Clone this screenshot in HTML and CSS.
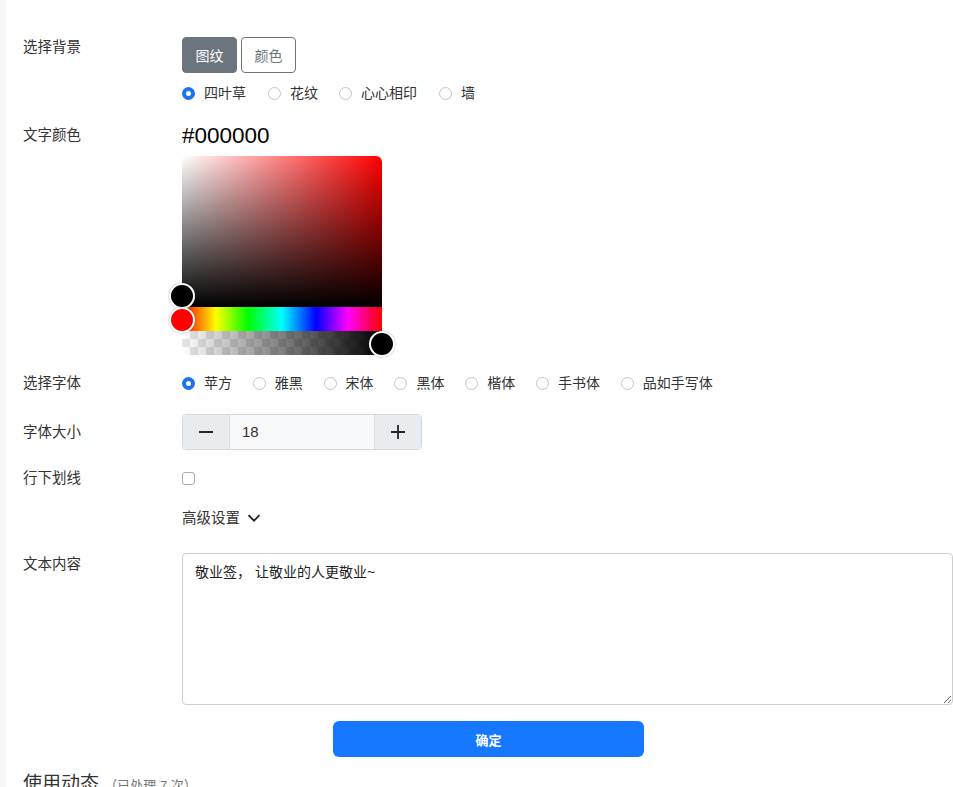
FILE: index.html
```html
<!DOCTYPE html>
<html lang="zh-CN">
<head>
<meta charset="utf-8">
<title>敬业签</title>
<link rel="stylesheet" href="styles.css">
</head>
<body>
<div class="page">
  <div class="row row-bg">
    <div class="label">选择背景</div>
    <div class="field">
      <div class="seg-group">
        <button class="seg seg-active">图纹</button>
        <button class="seg">颜色</button>
      </div>
      <div class="radios radios-bg">
        <label class="radio"><span class="dot dot-on"></span>四叶草</label>
        <label class="radio"><span class="dot"></span>花纹</label>
        <label class="radio"><span class="dot"></span>心心相印</label>
        <label class="radio"><span class="dot"></span>墙</label>
      </div>
    </div>
  </div>

  <div class="row row-color">
    <div class="label label-color">文字颜色</div>
    <div class="field">
      <div class="hex">#000000</div>
      <div class="picker">
        <div class="sat"></div>
        <div class="hue"></div>
        <div class="alpha"></div>
        <span class="knob knob-sat"></span>
        <span class="knob knob-hue"></span>
        <span class="knob knob-alpha"></span>
      </div>
    </div>
  </div>

  <div class="row row-font">
    <div class="label">选择字体</div>
    <div class="field">
      <div class="radios radios-font">
        <label class="radio"><span class="dot dot-on"></span>苹方</label>
        <label class="radio"><span class="dot"></span>雅黑</label>
        <label class="radio"><span class="dot"></span>宋体</label>
        <label class="radio"><span class="dot"></span>黑体</label>
        <label class="radio"><span class="dot"></span>楷体</label>
        <label class="radio"><span class="dot"></span>手书体</label>
        <label class="radio"><span class="dot"></span>品如手写体</label>
      </div>
    </div>
  </div>

  <div class="row row-size">
    <div class="label label-size">字体大小</div>
    <div class="field">
      <div class="stepper">
        <span class="step-btn">
          <svg width="16" height="16" viewBox="0 0 16 16"><path d="M1 8h14" stroke="#212529" stroke-width="2"/></svg>
        </span>
        <span class="num">18</span>
        <span class="step-btn">
          <svg width="16" height="16" viewBox="0 0 16 16"><path d="M1 8h14M8 1v14" stroke="#212529" stroke-width="1.8"/></svg>
        </span>
      </div>
    </div>
  </div>

  <div class="row row-line">
    <div class="label">行下划线</div>
    <div class="field field-check">
      <span class="check"></span>
    </div>
  </div>

  <div class="row row-adv">
    <div class="label"></div>
    <div class="field">
      <div class="adv">高级设置
        <svg class="chev" width="14" height="14" viewBox="0 0 14 14"><path d="M1.5 4.2L7 9.7l5.5-5.5" fill="none" stroke="#222" stroke-width="1.8"/></svg>
      </div>
    </div>
  </div>

  <div class="row row-text">
    <div class="label label-text">文本内容</div>
    <div class="field">
      <textarea class="content">敬业签， 让敬业的人更敬业~</textarea>
    </div>
  </div>

  <div class="row row-submit">
    <div class="label"></div>
    <div class="field">
      <button class="submit">确定</button>
    </div>
  </div>

  <div class="heading">使用动态 <span class="sub">（已处理 7 次）</span></div>
</div>
</body>
</html>
```
FILE: styles.css
```css
html, body {
  margin: 0;
  background: #fff;
}
body {
  font-family: "Liberation Sans", "Noto Sans CJK SC", sans-serif;
  color: #333;
  overflow: hidden;
}
.page {
  border-left: 6px solid #f8f8f8;
  padding: 37px 0 0 17px;
  height: 800px;
  box-sizing: border-box;
}
.row {
  display: flex;
  align-items: flex-start;
}
.label {
  width: 159px;
  flex: none;
  font-size: 14.5px;
  line-height: 20px;
  color: #333;
}
.field {
  flex: none;
}
.seg-group {
  display: flex;
  gap: 4px;
}
.seg {
  width: 55px;
  height: 36px;
  box-sizing: border-box;
  border: 1px solid #6c757d;
  border-radius: 4px;
  background: #fff;
  color: #6c757d;
  font-family: inherit;
  font-size: 14px;
  padding: 0;
}
.seg-active {
  background: #6c757d;
  color: #fff;
}
.radios {
  display: flex;
  align-items: center;
  height: 20px;
  font-size: 14px;
  color: #333;
}
.radios-bg {
  margin-top: 10px;
}
.radio {
  display: flex;
  align-items: center;
  margin-right: 22px;
  line-height: 20px;
}
.radios-bg .radio:nth-child(2) {
  margin-right: 21px;
}
.radios-font .radio {
  margin-right: 20.8px;
}
.dot {
  width: 13px;
  height: 13px;
  box-sizing: border-box;
  border: 1px solid #c4c4c4;
  border-radius: 50%;
  margin-right: 9px;
  background: #fff;
}
.dot-on {
  border: 4px solid #1a73f0;
}
.row-color {
  margin-top: 20px;
}
.label-color {
  padding-top: 2px;
}
.hex {
  font-size: 22.5px;
  line-height: 26px;
  color: #000;
}
.picker {
  position: relative;
  width: 200px;
  margin-top: 7px;
}
.sat {
  height: 151px;
  border-radius: 6px 6px 0 0;
  background: linear-gradient(to top, #000, rgba(0,0,0,0)), linear-gradient(to right, #fff, #f00);
}
.hue {
  height: 24px;
  background: linear-gradient(to right, #f00, #ff0 17%, #0f0 33%, #0ff 50%, #00f 67%, #f0f 83%, #f00);
}
.alpha {
  height: 24px;
  border-radius: 0 0 6px 6px;
  background: linear-gradient(to right, rgba(0,0,0,0), #000),
    repeating-conic-gradient(#e6e6e6 0 25%, #fff 0 50%) 0 0 / 16px 16px;
}
.knob {
  position: absolute;
  width: 26px;
  height: 26px;
  box-sizing: border-box;
  border: 2px solid #fff;
  border-radius: 50%;
  box-shadow: 0 0 2px rgba(0,0,0,0.35);
}
.knob-sat {
  left: -13px;
  top: 127px;
  background: #000;
}
.knob-hue {
  left: -13px;
  top: 151px;
  background: #f00;
}
.knob-alpha {
  left: 187px;
  top: 175px;
  background: #000;
}
.row-font {
  margin-top: 18px;
}
.row-size {
  margin-top: 21px;
}
.label-size {
  padding-top: 8px;
}
.stepper {
  display: flex;
  width: 240px;
  height: 36px;
  box-sizing: border-box;
  border: 1px solid #d4d8dc;
  border-radius: 4px;
  overflow: hidden;
}
.step-btn {
  width: 46px;
  flex: none;
  display: flex;
  align-items: center;
  justify-content: center;
  background: #e9ecef;
}
.num {
  flex: 1;
  background: #f8f9fa;
  border-left: 1px solid #dde0e3;
  border-right: 1px solid #dde0e3;
  font-size: 15px;
  line-height: 34px;
  padding-left: 12px;
  color: #333;
}
.row-line {
  margin-top: 18px;
}
.field-check {
  height: 20px;
  display: flex;
  align-items: center;
}
.check {
  width: 13px;
  height: 13px;
  box-sizing: border-box;
  border: 1px solid #a9a9a9;
  border-radius: 3px;
  background: #fff;
}
.row-adv {
  margin-top: 20px;
}
.adv {
  display: flex;
  align-items: center;
  font-size: 14.5px;
  line-height: 20px;
  color: #333;
}
.chev {
  margin-left: 7px;
}
.row-text {
  margin-top: 25px;
}
.label-text {
  padding-top: 1px;
}
.content {
  display: block;
  width: 771px;
  height: 152px;
  box-sizing: border-box;
  border: 1px solid #cfcfcf;
  border-radius: 4px;
  padding: 8px 12px;
  font-family: inherit;
  font-size: 14px;
  line-height: 20px;
  color: #222;
  resize: vertical;
  margin: 0;
}
.row-submit {
  margin-top: 16px;
}
.submit {
  margin-left: 151px;
  width: 311px;
  height: 36px;
  border: none;
  border-radius: 6px;
  background: #1677ff;
  color: #fff;
  font-family: inherit;
  font-size: 13px;
  font-weight: bold;
  padding: 0;
}
.heading {
  margin-top: 13px;
  font-size: 19px;
  line-height: 28px;
  color: #333;
}
.sub {
  font-size: 13px;
  color: #777;
}
```
